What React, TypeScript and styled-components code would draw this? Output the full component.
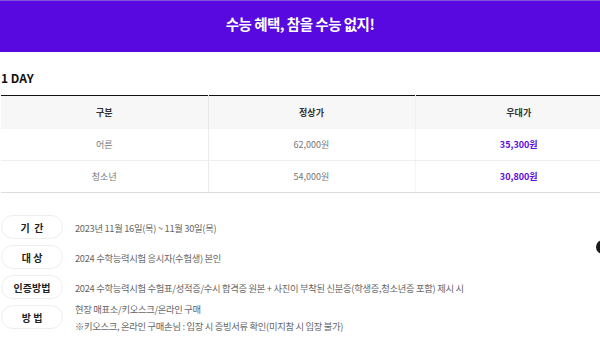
import React from 'react';
import styled, { createGlobalStyle } from 'styled-components';

const GlobalStyle = createGlobalStyle`
  html, body {
    margin: 0;
    padding: 0;
    overflow: hidden;
    background: #ffffff;
    font-family: 'Noto Sans CJK KR', 'Noto Sans', sans-serif;
  }
`;

const Page = styled('div')`
  position: relative;
  width: 600px;
  height: 338px;
  overflow: hidden;
`;

const Banner = styled('div')`
  display: flex;
  justify-content: center;
  align-items: center;
  height: 52px;
  background: #5709df;
  border-top: 1px solid #7f55e0;
  box-sizing: border-box;
  padding-bottom: 7px;
`;

const BannerTitle = styled('h1')`
  margin: 0;
  color: #ffffff;
  font-size: 14.5px;
  font-weight: 700;
  letter-spacing: -0.5px;
`;

const Section = styled('div')`
  width: 621px;
  padding-left: 1px;
`;

const SectionTitle = styled('h2')`
  margin: 0;
  padding-top: 17px;
  height: 43px;
  box-sizing: border-box;
  font-size: 12px;
  font-weight: 700;
  color: #111111;
  line-height: 18px;
`;

const Table = styled('table')`
  width: 621px;
  border-collapse: collapse;
  border-top: 1px solid #111111;
  table-layout: fixed;
`;

const HeadCell = styled('th')<{ $faint?: boolean }>`
  height: 33px;
  padding: 0;
  background: #f7f7f7;
  font-size: 9px;
  font-weight: 700;
  color: #333333;
  border-left: 1px solid ${p => (p.$faint ? '#f1f1f1' : '#e8e8e8')};
  &:first-child {
    border-left: none;
  }
`;

const Cell = styled('td')<{ $faint?: boolean; $accent?: boolean; $last?: boolean }>`
  height: 31px;
  padding: 0;
  text-align: center;
  font-size: 9px;
  font-weight: ${p => (p.$accent ? 700 : 400)};
  color: ${p => (p.$accent ? '#5a0be0' : '#777777')};
  border-left: 1px solid ${p => (p.$faint ? '#f4f4f4' : '#ebebeb')};
  border-bottom: 1px solid ${p => (p.$last ? '#dddddd' : '#eeeeee')};
  &:first-child {
    border-left: none;
  }
`;

const InfoList = styled('div')`
  display: flex;
  flex-direction: column;
  padding-top: 19px;
`;

const InfoRow = styled('div')`
  display: flex;
  align-items: center;
  gap: 12px;
  height: 30px;
`;

const Pill = styled('div')`
  display: flex;
  justify-content: center;
  align-items: center;
  flex-shrink: 0;
  width: 62px;
  height: 24px;
  box-sizing: border-box;
  border: 1px solid #eeeeee;
  border-radius: 12px;
  font-size: 10px;
  font-weight: 700;
  color: #222222;
  white-space: pre;
`;

const Value = styled('div')`
  font-size: 9.3px;
  line-height: 17px;
  color: #666666;
  white-space: nowrap;
  letter-spacing: -0.3px;
  padding-top: 2px;
`;

const FloatDot = styled('div')`
  position: absolute;
  left: 596px;
  top: 240px;
  width: 14px;
  height: 14px;
  border-radius: 50%;
  background: #1a1a1a;
`;

const rows = [
  { kind: '어른', normal: '62,000원', sale: '35,300원' },
  { kind: '청소년', normal: '54,000원', sale: '30,800원' },
];

const info = [
  { label: '기  간', lines: ['2023년 11월 16일(목) ~ 11월 30일(목)'] },
  { label: '대 상', lines: ['2024 수학능력시험 응시자(수험생) 본인'] },
  {
    label: '인증방법',
    lines: ['2024 수학능력시험 수험표/성적증/수시 합격증 원본 + 사진이 부착된 신분증(학생증,청소년증 포함) 제시 시'],
  },
  {
    label: '방 법',
    lines: ['현장 매표소/키오스크/온라인 구매', '※키오스크, 온라인 구매손님 : 입장 시 증빙서류 확인(미지참 시 입장 불가)'],
  },
];

export default function App() {
  return (
    <Page>
      <GlobalStyle />
      <Banner>
        <BannerTitle>수능 혜택, 참을 수능 없지!</BannerTitle>
      </Banner>
      <Section>
        <SectionTitle>1 DAY</SectionTitle>
        <Table>
          <thead>
            <tr>
              <HeadCell>구분</HeadCell>
              <HeadCell>정상가</HeadCell>
              <HeadCell $faint>우대가</HeadCell>
            </tr>
          </thead>
          <tbody>
            {rows.map((r, i) => (
              <tr key={r.kind}>
                <Cell $last={i === rows.length - 1}>{r.kind}</Cell>
                <Cell $last={i === rows.length - 1}>{r.normal}</Cell>
                <Cell $faint $accent $last={i === rows.length - 1}>
                  {r.sale}
                </Cell>
              </tr>
            ))}
          </tbody>
        </Table>
        <InfoList>
          {info.map(item => (
            <InfoRow key={item.label}>
              <Pill>{item.label}</Pill>
              <Value>
                {item.lines.map(line => (
                  <div key={line}>{line}</div>
                ))}
              </Value>
            </InfoRow>
          ))}
        </InfoList>
      </Section>
      <FloatDot />
    </Page>
  );
}
